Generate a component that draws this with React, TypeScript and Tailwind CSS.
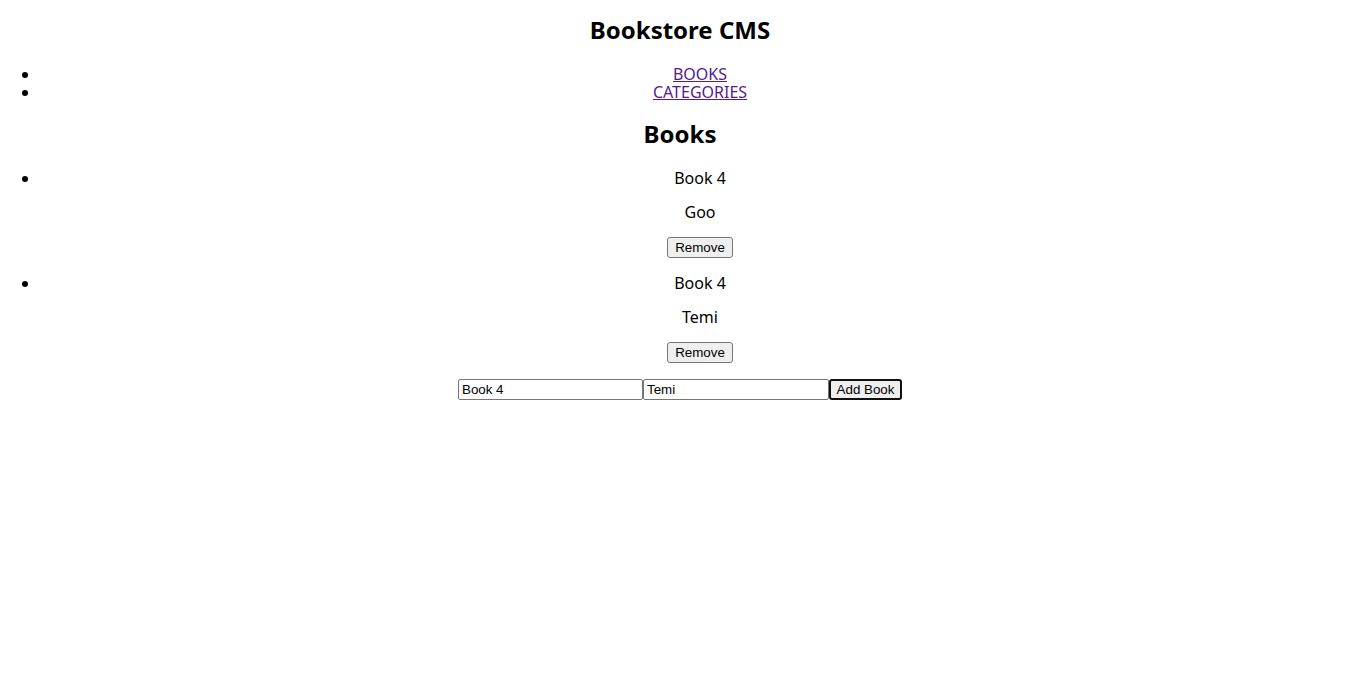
import { useState } from "react";

type Book = { id: number; title: string; author: string };

const ctrl =
  "font-['Liberation_Sans',Arial,sans-serif] text-[13.333px] leading-[15px] text-black";

export default function App() {
  const [books] = useState<Book[]>([
    { id: 1, title: "Book 4", author: "Goo" },
    { id: 2, title: "Book 4", author: "Temi" },
  ]);

  return (
    <div className="font-['Noto_Sans',Ubuntu,sans-serif] text-base text-black bg-white min-h-screen text-center pr-[3px]">
      {/* HEADER */}
      <header>
        <h1 className="pt-4 text-2xl font-bold leading-[28px]">Bookstore CMS</h1>
        <ul className="list-disc pl-10 mt-[21px]">
          <li className="leading-[18px]">
            <a href="#books" className="underline text-[#551a8b]">BOOKS</a>
          </li>
          <li className="leading-[18px]">
            <a href="#categories" className="underline text-[#551a8b]">CATEGORIES</a>
          </li>
        </ul>
      </header>

      {/* BOOKS */}
      <h2 className="mt-[19px] text-2xl font-bold leading-[28px]">Books</h2>
      <ul className="list-disc pl-10 mt-[5px]">
        {books.map((b) => (
          <li key={b.id} className="pt-4 leading-[18px]">
            <p>{b.title}</p>
            <p className="mt-4">{b.author}</p>
            <button
              className={`${ctrl} block mx-auto mt-4 h-[21px] px-[7px] bg-[#efefef] border border-[#767676] rounded-[3px]`}
            >
              Remove
            </button>
          </li>
        ))}
      </ul>

      {/* FORM */}
      <form className="mt-4 flex justify-center" onSubmit={(e) => e.preventDefault()}>
        <input
          defaultValue="Book 4"
          className={`${ctrl} w-[185px] h-[21px] px-[3px] border border-[#767676] rounded-[2px] bg-white`}
        />
        <input
          defaultValue="Temi"
          className={`${ctrl} w-[186px] h-[21px] px-[3px] border border-[#767676] rounded-[2px] bg-white`}
        />
        <button
          type="submit"
          className={`${ctrl} w-[73px] h-[21px] bg-[#efefef] border-2 border-[#101010] rounded-[3px]`}
        >
          Add Book
        </button>
      </form>
    </div>
  );
}
